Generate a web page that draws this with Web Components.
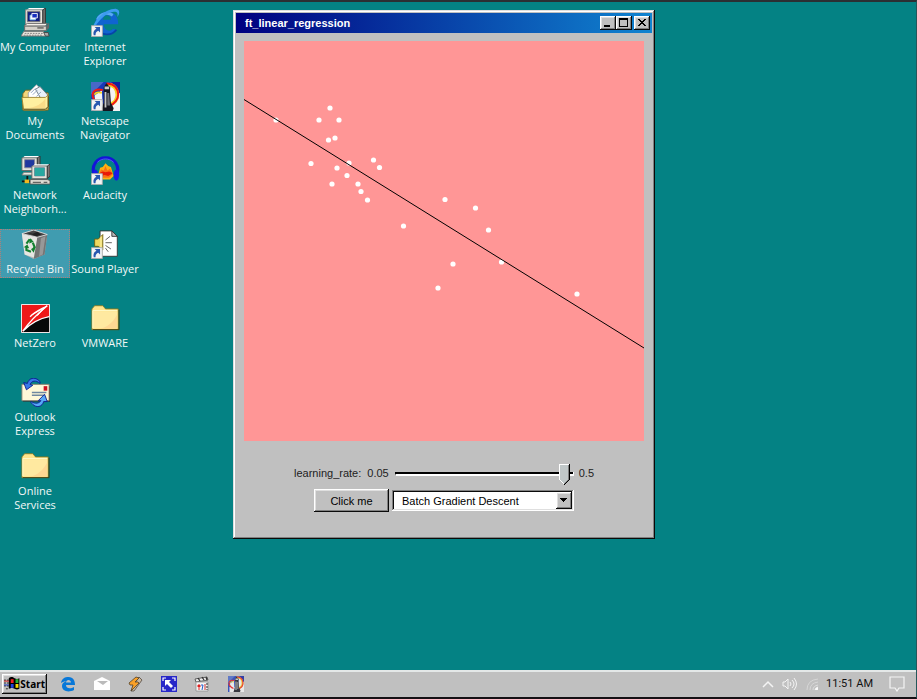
<!DOCTYPE html>
<html lang="en">
<head>
<meta charset="utf-8">
<title>ft_linear_regression</title>
<style>
html, body { height: 100%; margin: 0; }
body { background: #048284; font: 11px/14px "Liberation Sans", Arial, sans-serif; overflow: hidden; }
</style>
</head>
<body>
<retro-desktop>
  <icon-grid slot="icons">
    <desk-icon icon="computer">My Computer</desk-icon>
    <desk-icon icon="documents">My Documents</desk-icon>
    <desk-icon icon="network">Network Neighborh...</desk-icon>
    <desk-icon icon="bin" selected>Recycle Bin</desk-icon>
    <desk-icon icon="netzero">NetZero</desk-icon>
    <desk-icon icon="outlook">Outlook Express</desk-icon>
    <desk-icon icon="folder">Online Services</desk-icon>
    <desk-icon icon="ie" shortcut>Internet Explorer</desk-icon>
    <desk-icon icon="netscape" shortcut>Netscape Navigator</desk-icon>
    <desk-icon icon="audacity" shortcut>Audacity</desk-icon>
    <desk-icon icon="sound" shortcut>Sound Player</desk-icon>
    <desk-icon icon="folder">VMWARE</desk-icon>
  </icon-grid>
  <app-window slot="windows" heading="ft_linear_regression">
    <scatter-plot></scatter-plot>
    <regression-controls></regression-controls>
  </app-window>
  <task-bar slot="taskbar"></task-bar>
</retro-desktop>
<script>
const folder = `<path d="M1 31V5L4 1h9l3 4h14v26z" fill="#ffe58c" stroke="#8c7a20"/><path d="M2 8h27v21H2z" fill="#ffe9a0"/><path d="M10 30c8-2 14-8 19-18v18z" fill="#ffcf8c" opacity=".7"/><path d="M2 7h27M2 7v22" stroke="#fffbd0" fill="none"/><path d="M2 31h29V6" stroke="#3c3a10" fill="none"/>`;
const netscape = `<path fill="#1838b8" d="M0 0h32v32H0z"/><path fill="#4868c8" d="M0 0h14L0 14z"/><path fill="#f4f4f4" d="M22 0l10 12v20H18zM12 9l-8 6 1 14h8z"/><path fill="#1020a0" d="M22 0h10v13z"/><path fill="#f4f4f4" d="M3 22h10v10H3z"/><path d="M17 3c8-1 12 5 12 11 0 5-3 9-8 11" fill="none" stroke="#f8d020" stroke-width="4"/><path d="M17 2c9-1 13 6 13 12 0 5-4 10-9 12M13 9C6 7 1 10 2 16c1 4 4 7 9 9" fill="none" stroke="#f01818" stroke-width="2.200"/><path d="M4 14c1-3 4-3 8-2" fill="none" stroke="#f8d820" stroke-width="2"/><path fill="#15151f" d="M14 6l3-5 4 5v4l1 13 3 6-1 3H11l1-3 2-6z"/><path fill="#c8c8c8" d="M15 5h5v3h-5zM15 11h2v17h-2z"/><path fill="#707078" d="M18 12h2l1 14h-3z"/>`;
const pc = `<path d="M2 2L4 0h17l-2 2z" fill="#fff"/><path d="M1 2h17v14H1z" fill="#e4e4dc" stroke="#666"/><path d="M18 2l3-2v13l-3 3z" fill="#777" stroke="#333"/><path d="M4 4h11v9H4z" fill="#2038a0" stroke="#889"/>`;
const ICONS = {
  computer: `<path d="M6 2l3-2h18l-3 2z" fill="#fff"/><path d="M5 2h19v16H5z" fill="#ece8e0" stroke="#888"/><path d="M24 2l3-2v16l-3 3z" fill="#706c68" stroke="#333"/><path d="M7 4h14v11H7z" fill="#101c80" stroke="#777"/><path d="M10 8h6v5h-6z" fill="#fff" stroke="#88c8f0"/><path d="M12 6h6v5h-6z" fill="#1830c0" stroke="#fff"/><path d="M4 19l3-2h22l-2 3H4z" fill="#f4f0ea" stroke="#666"/><path d="M4 20h24v5H4z" fill="#d4d0c8" stroke="#666"/><path d="M18 22h7" stroke="#222"/><path d="M28 20l3-4v6l-3 3z" fill="#666"/><path d="M3 26h22l3 5H0z" fill="#f0ece4" stroke="#777"/><path d="M4 28h21M3 30h21" stroke="#777" stroke-dasharray="2 1"/><path d="M25 27h5l1 4h-4z" fill="#aaa" stroke="#444"/>`,
  documents: `<path d="M2 31V13l3-4h8l3 3h14v19z" fill="#f5d67a" stroke="#80681c"/><path d="M8 12L17 3l10 9v10H8z" fill="#fff" stroke="#98a0a8"/><path d="M16 8l5-3 10 11-7 6z" fill="#e8f0f8" stroke="#6a7680"/><path d="M11 12l5-5M13 14l5-5M17 16l5-5" stroke="#8ca0c0"/><path d="M1 17h26l3-3v14l-3 3H3z" fill="#fff0a0" stroke="#a08430"/><path d="M3 30h24l3-3V15" stroke="#40380c" fill="none"/><path d="M7 29c10-1 16-5 20-11v11z" fill="#f6cf78" opacity=".6"/>`,
  network: `<g>${pc}</g><path d="M3 18h14l3 3H1z" fill="#e8e8e0" stroke="#777"/><path d="M7 22v6M1 28h10" stroke="#111" stroke-width="2"/><path d="M4 26h5v4H4z" fill="#f0b820"/><g transform="translate(11 9)">${pc}<path d="M4 4h11v9H4z" fill="#28a8a0"/></g><path d="M10 26h19l3 1v4H10z" fill="#e0dcd4" stroke="#555"/><path d="M13 29h9M25 29h4" stroke="#333"/>`,
  bin: `<path d="M1 4l13-4 15 5-3 22-12 5L4 27z" fill="#b8b8b8"/><path d="M1 4l17 4-2 23-12-4z" fill="#e6e6e2"/><path d="M18 8l11-3-3 22-12 5z" fill="#747474"/><path d="M22 9l5-2-3 20-4 2z" fill="#989898"/><path d="M1 4l13-4 15 5-11 3z" fill="#444" stroke="#ddd"/><path d="M7 3l6 1 5-2 4 3-5 2z" fill="#222"/><g fill="none" stroke="#148030" stroke-width="2.4"><path d="M6 15l3-4 3 1M13 14l2 5-2 3M11 24l-5-2v-4"/></g><path d="M10 9l4 4-5 2zM16 19l-2 6-3-4zM3 19l4-3 2 4z" fill="#148030"/>`,
  netzero: `<path d="M.5.5h31v31H.5z" fill="#ee1818" stroke="#fff"/><path d="M1 31C9 22 18 17 31 14v17z" fill="#080808"/><path d="M10 14C16 8 22 6 29 2 18 11 9 20 2 30 11 21 20 16 31 14" fill="none" stroke="#fff" stroke-width="1.500"/><path d="M12 12l14-8M18 13l10-11" stroke="#fff"/>`,
  outlook: `<path d="M2 9h30v17H2z" fill="#222"/><path d="M1 7h30v18H1z" fill="#fff8d8" stroke="#888070"/><path d="M25 9h4v5h-4z" fill="#d01020"/><path d="M12 16h16M12 19h14" stroke="#7088a0" stroke-width="1.6"/><path d="M21 4C15-3 8 1 7 6L3 5l3 8 7-5-3-1c2-4 6-5 11-1z" fill="#3878e8" stroke="#0c1c90"/><path d="M11 27c6 8 13 4 14-1h4l-3-8-7 7h3c-2 3-6 4-11 1z" fill="#58a8f8" stroke="#0c1c90"/>`,
  folder: `<g transform="translate(0 1) scale(1 .88)">${folder}</g>`,
  ie: `<path d="M28 24C22 33 6 31 5 18 4 6 17 1 25 6c4 3 5 7 5 12H14c0 7 8 9 10 5z" fill="#1064d0"/><path d="M13 13h9c0-6-8-7-9 0z" fill="#048284"/><path d="M7 13c3-7 11-9 17-5" stroke="#58acf0" stroke-width="3" fill="none"/><path d="M2 25C1 15 16 0 28 1c5 1 3 7 1 9 1-5 0-6-4-6C16 5 7 15 2 25z" fill="#3c9cf0"/><path d="M6 22c5 9 17 9 22 2" stroke="#0844a8" stroke-width="2" fill="none"/>`,
  netscape,
  audacity: `<path d="M8 21L10 13l3-1 3-4 3 3 3 1 3 10-4 4H11z" fill="#ffb010"/><path d="M9 20l2-5 3 1 2-5 2 5 3-2 3 6-4 4H11z" fill="#f87018"/><path d="M9 19l4-2 3 1 4-1 4 2-5 3-4-1-4 1z" fill="#e81808"/><path d="M4 22C-1 10 7 2 16 2s17 8 12 20" stroke="#1414d8" stroke-width="3.4" fill="none"/><ellipse cx="5" cy="21" rx="3" ry="6" fill="#1818e8"/><ellipse cx="28" cy="21" rx="3" ry="6" fill="#1818e8"/><path d="M7 7c5-5 13-5 18 0" stroke="#5858ff" fill="none"/>`,
  sound: `<path d="M10 1h13l6 6v22H10z" fill="#fff" stroke="#333"/><path d="M23 1v6h6z" fill="#bbb" stroke="#333"/><path d="M4 10h4l5-5v17l-5-4H4z" fill="#f0d860" stroke="#706010"/><path d="M11 7v13" stroke="#fff8c0"/><path d="M16 11l5-4M16 14h7M16 17l6 4M16 20l3 4" stroke="#555"/>`
};
const shortcut = `<path d="M.5 19.500h12v12H.5z" fill="#f4f4f4" stroke="#aaa"/><path d="M10 21v6l-2-2c-2 1-3 2-3 5H3c-1-4 1-6 3-7l-2-2z" fill="#2858b0"/>`;
const bevelUp = `box-shadow: inset -1px -1px #0a0a0a, inset 1px 1px #fff, inset -2px -2px #808080, inset 2px 2px #dfdfdf;`;
const thumb = `url("data:image/svg+xml,%3Csvg xmlns='http://www.w3.org/2000/svg' width='11' height='21' shape-rendering='crispEdges'%3E%3Cpath fill='%23c0c7c8' d='M0 0h11v16H9v2H7v2H6v1H5v-1H4v-2H2v-2H0z'/%3E%3Cpath fill='%23fff' d='M0 0v16h1v1h1v1h1v1h1v1h1v-1H4v-1H3v-1H2v-1H1V1h9V0z'/%3E%3Cpath fill='%23808080' d='M9 1h1v15H9v1H8v1H7v1H6v1H5v-1h1v-1h1v-1h1v-1h1z'/%3E%3Cpath d='M10 0h1v16h-1v1H9v1H8v1H7v1H6v1H5v-1h1v-1h1v-1h1v-1h1v-1h1z'/%3E%3C/svg%3E")`;

function define(name, render) {
  customElements.define(name, class extends HTMLElement {
    constructor() {
      super();
      this.attachShadow({ mode: "open" });
    }
    connectedCallback() { this.shadowRoot.innerHTML = render(this); }
  });
}

define("retro-desktop", () => `<style>
  :host { display: flex; flex-direction: column; height: 100vh; box-sizing: border-box; position: relative;
    border-top: 2px solid #2b2f33; border-right: 1px solid #24575a; border-bottom: 2px solid #141014; }
  main { flex: 1; min-height: 0; padding-top: 5px; }
</style><main><slot name="icons"></slot><slot name="windows"></slot></main><slot name="taskbar"></slot>`);

define("icon-grid", () => `<style>
  :host { display: grid; width: max-content; grid-auto-flow: column; grid-template-rows: repeat(7, 74px); grid-auto-columns: 70px; }
</style><slot></slot>`);

define("desk-icon", el => `<style>
  :host { display: block; }
  button { display: flex; flex-direction: column; align-items: center; gap: 3px; width: 100%; padding: 1px 0 2px; border: 0; background: none;
    color: #f2f8f8; font: 11px/14px "Open Sans", "Noto Sans", sans-serif; }
  button.on { background: #409cb0; outline: 1px dotted #b08078; outline-offset: -1px; }
  svg { width: 29px; height: 29px; display: block; }
  span { margin: 0 -1px; text-align: center; }
</style><button type="button" class="${el.hasAttribute("selected") ? "on" : ""}"><svg viewBox="0 0 32 32" aria-hidden="true">${ICONS[el.getAttribute("icon")]}${el.hasAttribute("shortcut") ? shortcut : ""}</svg><span><slot></slot></span></button>`);

define("app-window", el => `<style>
  :host { display: block; position: absolute; left: 233px; top: 8px; background: #c0c0c0; padding: 3px;
    box-shadow: inset -1px -1px #0a0a0a, inset 1px 1px #dfdfdf, inset -2px -2px #808080, inset 2px 2px #fff; }
  header { display: flex; align-items: center; justify-content: space-between; padding: 3px 2px 3px 9px; background: linear-gradient(90deg, #000080, #1084d0); }
  h1 { margin: 0; color: #fff; font-size: 11px; line-height: 14px; }
  nav { display: flex; }
  button { width: 16px; height: 14px; padding: 0; border: 0; background: #c0c0c0; ${bevelUp} }
  button:last-child { margin-left: 2px; }
  svg { display: block; }
  section { padding: 8px; }
</style><header><h1>${el.getAttribute("heading")}</h1><nav>
<button type="button" aria-label="Minimize"><svg width="16" height="14" shape-rendering="crispEdges"><path d="M4 9h6v2H4z"/></svg></button><button type="button" aria-label="Maximize"><svg width="16" height="14" shape-rendering="crispEdges"><path fill-rule="evenodd" d="M3 2h9v9H3zM4 4v6h7V4z"/></svg></button><button type="button" aria-label="Close"><svg width="16" height="14" shape-rendering="crispEdges"><path d="M4 3h2v1h1v1h2V4h1V3h2v1h-1v1h-1v1H9v1h1v1h1v1h1v1h-2V9H9V8H7v1H6v1H4V9h1V8h1V7h1V6H6V5H5V4H4z"/></svg></button>
</nav></header><section><slot></slot></section>`);

const POINTS = [[32,79],[75,79],[86,67],[95,79],[84.500,99],[91,97],[67,122.500],[93,127],[105,122],[103,134.500],[88,143],[114,143],[117,150.500],[123.500,159],[129.500,119],[135.500,126.500],[201,158.500],[231.500,167],[244.500,189],[159.500,185],[209,223],[257.500,221],[194,247],[333,253]];
define("scatter-plot", () => `<style>
  :host { display: block; width: 400px; aspect-ratio: 1; background: #ff9696; }
  svg { display: block; width: 100%; height: 100%; }
</style><svg viewBox="0 0 400 400" role="img" aria-label="Data points with fitted line"><g fill="#fff">${POINTS.map(([x, y]) => `<circle cx="${x}" cy="${y}" r="2.600"/>`).join("")}</g><path d="M0 58.500L400 307" stroke="#000"/></svg>`);

define("regression-controls", () => `<style>
  :host { display: flex; flex-direction: column; align-items: center; gap: 5px; padding: 21px 0 16px; color: #222; }
  div { display: flex; align-items: center; }
  .rate { gap: 6px; height: 22px; }
  .pick { gap: 3px; }
  input { -webkit-appearance: none; appearance: none; width: 178px; height: 21px; margin: 0; background: transparent; }
  input::-webkit-slider-runnable-track { height: 2px; background: #000; box-shadow: 1px 0 #fff, 1px 1px #fff, 0 1px #808080, 1px 2px #fff; }
  input::-webkit-slider-thumb { -webkit-appearance: none; width: 11px; height: 21px; margin-top: -8px; background: ${thumb} no-repeat; }
  button { min-width: 75px; height: 23px; padding: 0 12px; border: 0; background: #c0c0c0; font: inherit; color: #000; ${bevelUp} }
  .box { position: relative; }
  select { appearance: none; display: block; width: 182px; height: 21px; padding: 3px 32px 3px 10px; border: 0; border-radius: 0; color: #000; font: inherit; background: #fff;
    box-shadow: inset -1px -1px #fff, inset 1px 1px #808080, inset -2px -2px #dfdfdf, inset 2px 2px #0a0a0a; }
  .arrow { position: absolute; right: 2px; top: 2px; width: 16px; height: 17px; background: #c0c0c0; pointer-events: none; ${bevelUp} }
</style>
<div class="rate"><label for="rate">learning_rate:</label><span>0.05</span><input id="rate" type="range" min="0.05" max="0.5" step="0.001" value="0.492"><span>0.5</span></div>
<div class="pick"><button type="button">Click me</button><span class="box"><select aria-label="Method"><option>Batch Gradient Descent</option><option>Stochastic Gradient Descent</option></select><svg class="arrow" shape-rendering="crispEdges"><path d="M4 6h7v1h-1v1H9v1H8v1H7V9H6V8H5V7H4z"/></svg></span></div>`);

const flag = `<svg width="17" height="15" viewBox="0 0 17 15" aria-hidden="true"><path d="M0 4h5M0 7h5M0 10h5M2 13h3" stroke="#222" stroke-dasharray="2 1"/><path d="M5 2c3-2 4-1 6 0s3 1 5 0v11c-2 1-3 1-5 0s-3-1-6 0z" fill="#000"/><path d="M7 3l3 0v4H7z" fill="#f02020"/><path d="M12 3l3 0v4h-3z" fill="#20b030"/><path d="M7 8l3 0v4H7z" fill="#2040e0"/><path d="M12 8l3 0v4h-3z" fill="#f8d800"/><path d="M0 5h5" stroke="#e02020"/><path d="M0 9h5" stroke="#2040d0"/></svg>`;
const APPS = {
  Edge: `<path d="M1 7C2 2 5 1 8.500 1c5 0 6.500 4 6.500 8H6c0 4 5 4 8 2v3C8 17 2 15 2 10c0-3 2-4 5-5-3 0-4 1-6 2zM6 6.500h5C11 3 6 3 6 6.500z" fill="#0878d8" fill-rule="evenodd"/>`,
  Mail: `<path d="M0 5l8-4 8 4v9H0z" fill="#fff"/><path d="M3 5h11L9 9z" fill="#bbb"/>`,
  Winamp: `<path d="M12 1l3 3-8 11-3 0 4-8z" fill="#c8b8a0" stroke="#443830" stroke-width=".7"/><path d="M9 1L2 7l1 2h3l-2 6 8-8-1-1H8l4-4z" fill="#f8a028" stroke="#504028" stroke-width=".8"/>`,
  Viewer: `<path d="M0 0h16v16H0z" fill="#2828c8"/><path d="M2 5V2h3M11 2h3v3M14 11v3h-3M5 14H2v-3" fill="none" stroke="#fff" stroke-width="1.200"/><path d="M4 4h6L8 6l4 4-2 2-4-4-2 2z" fill="#fff"/>`,
  Media: `<path d="M1 3l12-2 1 3L2 6z" fill="#eee" stroke="#444" stroke-width=".8"/><path d="M2 6h12v9H2z" fill="#f4f4f4" stroke="#888" stroke-width=".7"/><path d="M4 2l2 3M8 1l2 3M12 1l1 3" stroke="#333" stroke-width="1.300"/><path d="M4 9h2v2H4zM4 13h2" fill="#e02020" stroke="#e02020"/><path d="M7 9h2l-1 5" fill="none" stroke="#2060d0"/><path d="M11 8v6" stroke="#d03030"/><path d="M13 7v7" stroke="#222" stroke-dasharray="2 1"/>`,
  Netscape: `<g transform="scale(.5)" opacity=".8">${netscape}</g>`
};
define("task-bar", () => `<style>
  :host { display: flex; align-items: center; height: 27px; box-sizing: border-box; padding: 0 11px 2px 2px; background: #c0c0c0; border-top: 2px solid #e4e8e8; }
  button { padding: 0; border: 0; background: none; }
  svg { display: block; }
  .start { display: flex; align-items: center; width: 45px; height: 20px; padding: 0 2px; font: bold 10px/14px "Noto Sans", sans-serif; color: #000; ${bevelUp} }
  .apps { display: flex; justify-content: space-between; width: 184px; margin-left: 13px; }
  .apps svg { width: 16px; height: 16px; }
  .tray { display: flex; align-items: center; gap: 8px; margin-left: auto; }
  .tray svg { fill: none; stroke: #f4f4f4; }
  time { font: 11px/14px Roboto, "Open Sans", sans-serif; color: #111; }
  .note { margin-left: 8px; }
</style>
<button type="button" class="start">${flag}<span>Start</span></button>
<div class="apps">${Object.entries(APPS).map(([n, p]) => `<button type="button" aria-label="${n}"><svg viewBox="0 0 16 16">${p}</svg></button>`).join("")}</div>
<div class="tray">
<button type="button" aria-label="Hidden icons"><svg width="12" height="8"><path d="M1 7l5-5 5 5" stroke-width="1.500"/></svg></button>
<button type="button" aria-label="Volume"><svg width="16" height="14"><path d="M1 5h2l3-3v10L3 9H1zM8 5q2 2 0 4M10 3q4 4 0 8M12 1q5 6 0 12"/></svg></button>
<button type="button" aria-label="Network"><svg width="12" height="12"><path d="M1 12Q1 2 12 1M4 12Q4 5 12 4" stroke="#d6d6d6"/><path d="M7 12Q7 8 12 7" stroke="#ddd"/><path d="M9 12q0-2 3-3v3z" fill="#fff"/></svg></button>
<time>11:51 AM</time>
<button type="button" class="note" aria-label="Notifications"><svg width="16" height="16"><path d="M1 1h14v11h-5l-2 3-2-3H1z" stroke-width="1.200"/></svg></button>
</div>`);
</script>
</body>
</html>
